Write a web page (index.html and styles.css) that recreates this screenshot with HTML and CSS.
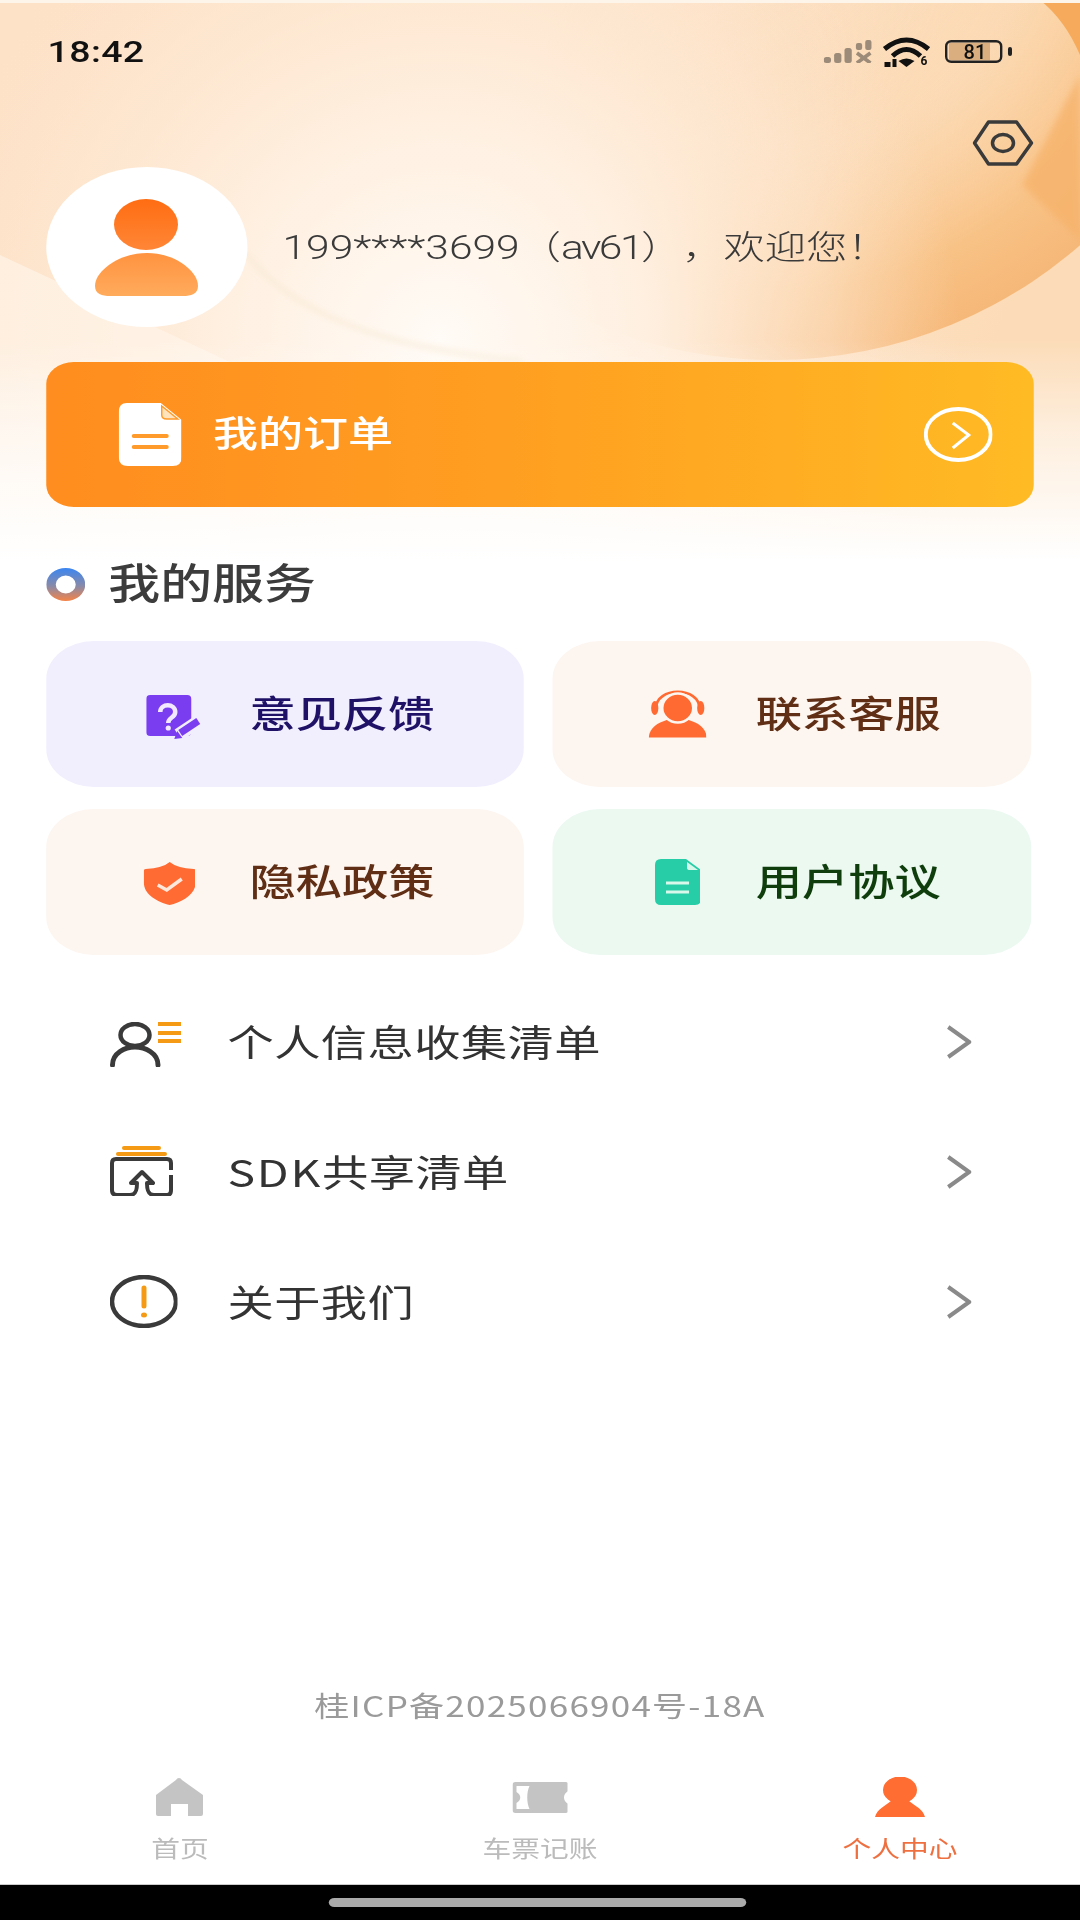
FILE: index.html
```html
<!DOCTYPE html>
<html lang="zh-CN">
<head>
<meta charset="utf-8">
<title>个人中心</title>
<link rel="stylesheet" href="styles.css">
</head>
<body>
<div class="stage">
  <svg class="hero-bg" viewBox="0 0 1080 580" preserveAspectRatio="none" aria-hidden="true">
    <defs>
      <linearGradient id="bgBase" x1="0" y1="0" x2="1" y2="0.2">
        <stop offset="0" stop-color="#fde2c8"/>
        <stop offset="0.6" stop-color="#fde3c9"/>
        <stop offset="1" stop-color="#fcdcb8"/>
      </linearGradient>
      <radialGradient id="bgCrescent" gradientUnits="userSpaceOnUse" cx="774" cy="-105" r="465">
        <stop offset="0" stop-color="#fbd3a6" stop-opacity="0"/>
        <stop offset="0.55" stop-color="#fbd3a6" stop-opacity="0.35"/>
        <stop offset="0.85" stop-color="#f8c286"/>
        <stop offset="1" stop-color="#f6b878"/>
      </radialGradient>
      <linearGradient id="bgCrescentFade" gradientUnits="userSpaceOnUse" x1="560" y1="0" x2="900" y2="140">
        <stop offset="0" stop-color="#000"/>
        <stop offset="1" stop-color="#fff"/>
      </linearGradient>
      <mask id="bgCrescentMask" maskUnits="userSpaceOnUse" x="0" y="0" width="1080" height="580">
        <rect width="1080" height="580" fill="url(#bgCrescentFade)"/>
      </mask>
      <radialGradient id="bgGlow" gradientUnits="userSpaceOnUse" cx="440" cy="340" r="520">
        <stop offset="0" stop-color="#fffbf6"/>
        <stop offset="0.4" stop-color="#fff1e3" stop-opacity="0.95"/>
        <stop offset="0.75" stop-color="#fee9d4" stop-opacity="0.55"/>
        <stop offset="1" stop-color="#fde3c9" stop-opacity="0"/>
      </radialGradient>
      <linearGradient id="bgFade" x1="0" y1="0" x2="0" y2="1">
        <stop offset="0" stop-color="#fff" stop-opacity="0"/>
        <stop offset="0.4" stop-color="#fff" stop-opacity="0.55"/>
        <stop offset="0.92" stop-color="#fff"/>
      </linearGradient>
      <filter id="bgSoft" x="-10%" y="-10%" width="120%" height="120%"><feGaussianBlur stdDeviation="3"/></filter>
    </defs>
    <rect width="1080" height="580" fill="url(#bgBase)"/>
    <g mask="url(#bgCrescentMask)"><circle cx="774" cy="-105" r="465" fill="url(#bgCrescent)"/></g>
    <rect width="1080" height="580" fill="url(#bgGlow)"/>
    <path d="M1080 75 L1022 185 L1080 240Z" fill="#f6b26b" opacity="0.75" filter="url(#bgSoft)"/>
    <path d="M1040 0 Q1065 20 1080 55 V0Z" fill="#f6ab5c"/>
    <path d="M0 255 L230 362 L230 580 L0 580Z" fill="#fff6ec" opacity="0.6"/>
    <path d="M240 245 C270 290 340 345 523 361" fill="none" stroke="#f5e6cd" stroke-width="2.5" filter="url(#bgSoft)"/>
    <rect y="340" width="1080" height="240" fill="url(#bgFade)"/>
    <rect width="1080" height="3" fill="#fdf4ea"/>
  </svg>

  <header class="statusbar">
    <span class="clock">18:42</span>
    <span class="status-icons">
      <svg class="ic-signal" viewBox="0 0 47 23" preserveAspectRatio="none">
        <g fill="#9c8b78">
          <rect x="0" y="17" width="7" height="6" rx="2.5"/>
          <rect x="10" y="13" width="7" height="10" rx="2.5"/>
          <rect x="20" y="8" width="7" height="15" rx="2.5"/>
          <rect x="31" y="3" width="6" height="7" rx="2"/>
          <rect x="40" y="0" width="6" height="10" rx="2"/>
        </g>
        <path d="M32 13 L45 23 M45 13 L32 23" stroke="#9c8b78" stroke-width="3.5"/>
      </svg>
      <svg class="ic-wifi" viewBox="0 0 48 34" preserveAspectRatio="none">
        <path d="M2 15 Q24 -3 46 15" fill="none" stroke="#111" stroke-width="5"/>
        <path d="M10 22 Q24 9 38 22" fill="none" stroke="#111" stroke-width="5"/>
        <path d="M16 27 Q24 22 32 27 L24 33Z" fill="#111"/>
        <path d="M2 28 h6 v5 h-6z M10 25 h4 v8 h-4z" fill="#111"/>
        <text class="wifi-six" x="38" y="31">6</text>
      </svg>
      <svg class="ic-battery" viewBox="0 0 67 23" preserveAspectRatio="none">
        <rect x="4" y="3" width="41" height="17" fill="#dbae80"/>
        <rect x="1.2" y="1.2" width="55" height="20.6" rx="5" fill="none" stroke="#222" stroke-width="2.4"/>
        <rect x="63" y="7" width="4" height="9" rx="2" fill="#222"/>
        <text class="battery-num" x="30" y="18.5">81</text>
      </svg>
    </span>
  </header>

  <div class="settings-row">
    <svg class="ic-settings" viewBox="0 0 61 46" preserveAspectRatio="none">
      <path d="M2 23 L16 2 H44 L59 23 L44 44 H16Z" fill="none" stroke="#3a3a3a" stroke-width="3.5" stroke-linejoin="round"/>
      <ellipse cx="30.5" cy="23" rx="10.5" ry="8.5" fill="none" stroke="#3a3a3a" stroke-width="3.5"/>
    </svg>
  </div>

  <section class="profile">
    <div class="avatar">
      <svg class="ic-person" viewBox="0 0 103 97" preserveAspectRatio="none">
        <defs>
          <linearGradient id="headFill" x1="0" y1="0" x2="0" y2="1"><stop offset="0" stop-color="#ff6d12"/><stop offset="1" stop-color="#ff8636"/></linearGradient>
          <linearGradient id="bodyFill" x1="0" y1="0" x2="0" y2="1"><stop offset="0" stop-color="#ff9340"/><stop offset="1" stop-color="#ffab5c"/></linearGradient>
        </defs>
        <ellipse cx="51" cy="25.5" rx="32" ry="25.5" fill="url(#headFill)"/>
        <path d="M52 54 C80 54 103 72 103 87 C103 95 96 97 88 97 L15 97 C7 97 0 95 0 87 C0 72 24 54 52 54Z" fill="url(#bodyFill)"/>
      </svg>
    </div>
    <p class="username"><span class="latin">199****3699</span>（<span class="latin latin-tight">av61</span>），欢迎您！</p>
  </section>

  <a class="order-card">
    <svg class="ic-doc-white" viewBox="0 0 63 63" preserveAspectRatio="none">
      <path d="M8 0 H42 L63 17 V54 Q63 63 54 63 H9 Q0 63 0 54 V9 Q0 0 8 0Z" fill="#fff"/>
      <path d="M43 3 V12 Q43 16 48 16 H59Z" fill="#ffe3bd" stroke="#ff9b2a" stroke-width="1.5"/>
      <path d="M15 33 H48 M15 44 H48" stroke="#ff9b2a" stroke-width="4" stroke-linecap="round"/>
    </svg>
    <span class="order-label">我的订单</span>
    <svg class="ic-circle-arrow" viewBox="0 0 69 55" preserveAspectRatio="none">
      <ellipse cx="34.5" cy="27.5" rx="32.5" ry="25.5" fill="none" stroke="#fff" stroke-width="4"/>
      <path d="M29 16 L45 28 L29 41" fill="none" stroke="#fff" stroke-width="3"/>
    </svg>
  </a>

  <h2 class="section-title">
    <svg class="ic-ring" viewBox="0 0 39 33" preserveAspectRatio="none">
      <defs><linearGradient id="ringFill" x1="0" y1="0" x2="0" y2="1"><stop offset="0" stop-color="#3a86f2"/><stop offset="0.55" stop-color="#8a8aa8"/><stop offset="1" stop-color="#f58347"/></linearGradient></defs>
      <path fill-rule="evenodd" d="M0 16.5 A19.5 16.5 0 0 1 39 16.5 A19.5 16.5 0 0 1 0 16.5Z M9.5 16.5 A10 9 0 0 0 29.5 16.5 A10 9 0 0 0 9.5 16.5Z" fill="url(#ringFill)"/>
    </svg>
    <span class="section-text">我的服务</span>
  </h2>

  <section class="services">
    <a class="svc svc-violet">
      <span class="svc-icon">
        <svg class="ic-feedback" viewBox="0 0 55 45" preserveAspectRatio="none">
          <rect width="45" height="41" rx="4" fill="#7a3df0"/>
          <path d="M14 17 C14 8 29 8 29 17 C29 23 22 22 22 28" fill="none" stroke="#f3e9ff" stroke-width="4.5"/>
          <circle cx="22" cy="33" r="2.6" fill="#f3e9ff"/>
          <path d="M53 26 L32 40" stroke="#f1effe" stroke-width="13"/>
          <path d="M52 26 L34 38" stroke="#7a3df0" stroke-width="7"/>
          <path d="M31 36 L28 44 L36 43Z" fill="#7a3df0"/>
        </svg>
      </span>
      <span class="svc-label">意见反馈</span>
    </a>
    <a class="svc svc-peach">
      <span class="svc-icon">
        <svg class="ic-headset" viewBox="0 0 58 48" preserveAspectRatio="none">
          <path d="M7 19 C7 -4 51 -4 51 19" fill="none" stroke="#ff6a33" stroke-width="2.6"/>
          <ellipse cx="6" cy="18" rx="3.6" ry="7" fill="#ff6a33"/>
          <ellipse cx="52" cy="18" rx="3.6" ry="7" fill="#ff6a33"/>
          <path d="M0 47.5 C1 37 9 33 18 30 H40 C49 33 57 37 58 47.5Z" fill="#ff6a33"/>
          <ellipse cx="29" cy="18" rx="15.5" ry="14.5" fill="#ff6a33" stroke="#fdf5ef" stroke-width="2.5"/>
        </svg>
      </span>
      <span class="svc-label">联系客服</span>
    </a>
    <a class="svc svc-peach">
      <span class="svc-icon">
        <svg class="ic-shield" viewBox="0 0 52 43" preserveAspectRatio="none">
          <path d="M26 0 Q33 6 50 7 Q52 7 52 9 V20 C52 33 38 40 26 43 C14 40 0 33 0 20 V9 Q0 7 2 7 Q19 6 26 0Z" fill="#ff6b33"/>
          <path d="M14 23 L23 28 L38 17" fill="none" stroke="#fde6da" stroke-width="3.5"/>
        </svg>
      </span>
      <span class="svc-label">隐私政策</span>
    </a>
    <a class="svc svc-mint">
      <span class="svc-icon">
        <svg class="ic-doc-green" viewBox="0 0 46 46" preserveAspectRatio="none">
          <path d="M6 0 H31 L46 11 V40 Q46 46 40 46 H6 Q0 46 0 40 V6 Q0 0 6 0Z" fill="#26cda6"/>
          <path d="M32 3 V9 Q32 11 35 11 H43Z" fill="#d9f8ec"/>
          <path d="M11 24 H34 M11 33 H34" stroke="#d9f8ec" stroke-width="3"/>
        </svg>
      </span>
      <span class="svc-label svc-label-green">用户协议</span>
    </a>
  </section>

  <nav class="menu">
    <a class="menu-row">
      <span class="menu-icon">
        <svg class="ic-info" viewBox="0 0 71 45" preserveAspectRatio="none">
          <ellipse cx="25" cy="13" rx="14.5" ry="11" fill="none" stroke="#3a3a3a" stroke-width="4.5"/>
          <path d="M2.5 43 C2.5 31 15 25 25 25 C35 25 48 31 48 43" fill="none" stroke="#3a3a3a" stroke-width="5" stroke-linecap="round"/>
          <path d="M48 2 H71 M48 11 H71 M48 19 H71" stroke="#f59a14" stroke-width="4"/>
        </svg>
      </span>
      <span class="menu-label">个人信息收集清单</span>
      <svg class="ic-chevron" viewBox="0 0 25 34" preserveAspectRatio="none"><path d="M2 2 L23 17 L2 32" fill="none" stroke="#8a8a8a" stroke-width="4"/></svg>
    </a>
    <a class="menu-row">
      <span class="menu-icon">
        <svg class="ic-sdk" viewBox="0 0 66 50" preserveAspectRatio="none">
          <path d="M14 2 H49 M8 8 H55" stroke="#f59a14" stroke-width="4" stroke-linecap="round"/>
          <path d="M61 24 V17 Q61 13 57 13 H6 Q2 13 2 17 V44 Q2 49 7 49 H20 C26 49 27 44 27 37 H21 L32 26 L43 37 H37 C37 44 38 49 44 49 H57 Q61 49 61 44 V29" fill="none" stroke="#3a3a3a" stroke-width="4" stroke-linejoin="round"/>
        </svg>
      </span>
      <span class="menu-label"><span class="sdk">SDK</span>共享清单</span>
      <svg class="ic-chevron" viewBox="0 0 25 34" preserveAspectRatio="none"><path d="M2 2 L23 17 L2 32" fill="none" stroke="#8a8a8a" stroke-width="4"/></svg>
    </a>
    <a class="menu-row">
      <span class="menu-icon">
        <svg class="ic-about" viewBox="0 0 68 53" preserveAspectRatio="none">
          <ellipse cx="34" cy="26.5" rx="32" ry="24.5" fill="none" stroke="#3a3a3a" stroke-width="4.5"/>
          <path d="M34 13 V31" stroke="#f59a14" stroke-width="5" stroke-linecap="round"/>
          <ellipse cx="34" cy="40" rx="3" ry="2.5" fill="#f59a14"/>
        </svg>
      </span>
      <span class="menu-label">关于我们</span>
      <svg class="ic-chevron" viewBox="0 0 25 34" preserveAspectRatio="none"><path d="M2 2 L23 17 L2 32" fill="none" stroke="#8a8a8a" stroke-width="4"/></svg>
    </a>
  </nav>

  <p class="icp">桂ICP备2025066904号-18A</p>

  <footer class="tabbar">
    <a class="tab">
      <span class="tab-icon">
        <svg class="ic-home" viewBox="0 0 49 38" preserveAspectRatio="none">
          <path d="M24 0 Q26 0 27 2 L48 17 V36 Q48 38 46 38 H33 V26 H16 V38 H3 Q1 38 1 36 V17 L21 2 Q22 0 24 0Z" fill="#c4c4c4"/>
        </svg>
      </span>
      <span class="tab-label">首页</span>
    </a>
    <a class="tab">
      <span class="tab-icon">
        <svg class="ic-ticket" viewBox="0 0 56 31" preserveAspectRatio="none">
          <path d="M3 0 H53 Q56 0 56 3 V9 C50 12 50 19 56 22 V28 Q56 31 53 31 H3 Q0 31 0 28 V3 Q0 0 3 0Z" fill="#c4c4c4"/>
          <path d="M4 4 H17 C14 10 14 21 17 27 H4 V21 C9 18 9 13 4 10Z" fill="#fff"/>
        </svg>
      </span>
      <span class="tab-label">车票记账</span>
    </a>
    <a class="tab">
      <span class="tab-icon">
        <svg class="ic-me" viewBox="0 0 50 40" preserveAspectRatio="none">
          <ellipse cx="25" cy="13" rx="17" ry="13.5" fill="#ff6d33"/>
          <path d="M0 40 C2 32 10 29 16 24 H34 C40 29 48 32 50 40Z" fill="#ff6d33"/>
        </svg>
      </span>
      <span class="tab-label tab-label-on">个人中心</span>
    </a>
  </footer>

  <div class="homebar"><span class="home-pill"></span></div>
</div>
</body>
</html>
```

FILE: styles.css
```css
* { box-sizing: border-box; }
html, body { margin: 0; padding: 0; background: #fff; overflow: hidden; }
a { display: flex; color: inherit; text-decoration: none; }
p, h2 { margin: 0; }
svg { display: block; flex: none; }

/* The screen was captured squeezed; it is laid out at 864 wide and widened to 1080. */
.stage {
  position: relative;
  display: flex;
  flex-direction: column;
  width: 864px;
  height: 1920px;
  overflow: hidden;
  background: #fff;
  font-family: "Noto Sans CJK SC", "Noto Sans", sans-serif;
  color: #333;
  transform: scaleX(1.25);
  transform-origin: 0 0;
}
.stage > * { position: relative; }
.stage > .hero-bg { position: absolute; left: 0; top: 0; width: 864px; height: 580px; }

.statusbar { display: flex; align-items: center; justify-content: space-between; height: 102px; padding: 0 54px 0 38px; flex: none; }
.clock { font-family: Roboto, sans-serif; font-weight: 500; font-size: 30px; letter-spacing: 0.3px; color: #111; }
.status-icons { display: flex; align-items: center; }
.ic-signal { width: 39px; height: 23px; }
.ic-wifi { width: 38.4px; height: 34px; margin-left: 7.5px; }
.ic-battery { width: 53.6px; height: 23px; margin-left: 12.5px; }
.wifi-six { font: 700 12px Roboto, sans-serif; fill: #111; }
.battery-num { font: 500 20px Roboto, sans-serif; fill: #111; text-anchor: middle; }

.settings-row { display: flex; justify-content: flex-end; margin-top: 18px; padding-right: 37px; flex: none; }
.ic-settings { width: 48.8px; height: 46px; }

.profile { display: flex; align-items: center; margin-top: 1px; padding-left: 37px; flex: none; }
.avatar { display: flex; align-items: center; justify-content: center; width: 161px; height: 160px; border-radius: 50%; background: #fff; }
.ic-person { width: 82.4px; height: 97px; }
.username { margin-left: 28px; padding-bottom: 3px; font-size: 33px; line-height: 48px; color: #3a3a3a; white-space: nowrap; font-weight: 300; text-spacing-trim: space-all; text-autospace: no-autospace; }
.latin { font-family: Roboto, sans-serif; font-size: 34px; font-weight: 300; }
.latin-tight { letter-spacing: -2px; }

.order-card {
  display: flex; align-items: center; flex: none;
  height: 145px; margin: 35px 37px 0; padding: 0 33px 0 58px;
  border-radius: 22px;
  background: linear-gradient(90deg, #ff8d1f 0%, #ffa021 50%, #ffbb24 100%);
}
.ic-doc-white { width: 50.4px; height: 63px; }
.order-label { margin-left: 25px; padding-bottom: 7px; font-size: 36px; line-height: 44px; font-weight: 500; color: #fff; }
.ic-circle-arrow { width: 55.2px; height: 55px; margin-left: auto; }

.section-title { display: flex; align-items: center; height: 40px; margin-top: 57px; padding-left: 37px; font-size: 41.5px; font-weight: 500; color: #3c3c3c; flex: none; }
.section-text { padding-bottom: 6px; }
.ic-ring { width: 31.2px; height: 33px; margin-right: 18.5px; }

.services { display: grid; grid-template-columns: 382px 382.6px; grid-auto-rows: 146px; gap: 22px 23px; margin-top: 37px; padding-left: 37px; flex: none; }
.svc { display: flex; align-items: center; padding-left: 68px; border-radius: 38px; }
.svc-violet { background: #f1effe; color: #1f1266; }
.svc-peach { background: #fdf5ef; color: #5f2e15; }
.svc-mint { background: #ebf9f1; color: #0f3d0c; }
.svc-icon { display: flex; justify-content: center; width: 64px; margin-right: 30.6px; }
.svc-label { padding-bottom: 5px; font-size: 37px; line-height: 44px; font-weight: 500; }
.ic-feedback { width: 44px; height: 45px; margin: 7px 0 0 4px; }
.ic-headset { width: 46.4px; height: 48px; }
.ic-shield { width: 41.6px; height: 43px; margin: 2px 3px 0 0; }
.ic-doc-green { width: 36.8px; height: 46px; }

.menu { margin-top: 21px; flex: none; }
.menu-row { display: flex; align-items: center; height: 130px; padding: 0 87px 0 88px; }
.menu-icon { display: block; width: 94px; flex: none; }
.menu-label { font-size: 37px; line-height: 44px; letter-spacing: 0.35px; color: #333; white-space: nowrap; }
.sdk { letter-spacing: 1.4px; }
.ic-chevron { width: 20px; height: 34px; margin: 1px 0 0 auto; }
.ic-info { width: 56.8px; height: 45px; margin-top: 7px; }
.ic-sdk { width: 52.8px; height: 50px; }
.ic-about { width: 54.4px; height: 53px; }

.icp { margin-top: auto; margin-bottom: 45px; font-size: 28px; line-height: 40px; letter-spacing: 1px; text-align: center; color: #9a9a9a; flex: none; }

.tabbar { display: grid; grid-template-columns: repeat(3, 1fr); height: 114px; flex: none; }
.tab { display: flex; flex-direction: column; align-items: center; padding-top: 6px; }
.tab-icon { display: flex; align-items: center; justify-content: center; height: 42px; }
.tab-label { margin-top: 14px; font-size: 23px; line-height: 30px; color: #bbb; }
.tab-label-on { color: #ee7040; }
.ic-home { width: 39.2px; height: 38px; }
.ic-ticket { width: 44.8px; height: 31px; }
.ic-me { width: 40px; height: 40px; }

.homebar { display: flex; align-items: center; justify-content: center; height: 36px; padding-right: 5px; background: #000; border-top: 1px solid #ccc; flex: none; }
.home-pill { display: block; width: 334px; height: 9px; border-radius: 5px; background: #aaa; }
```
